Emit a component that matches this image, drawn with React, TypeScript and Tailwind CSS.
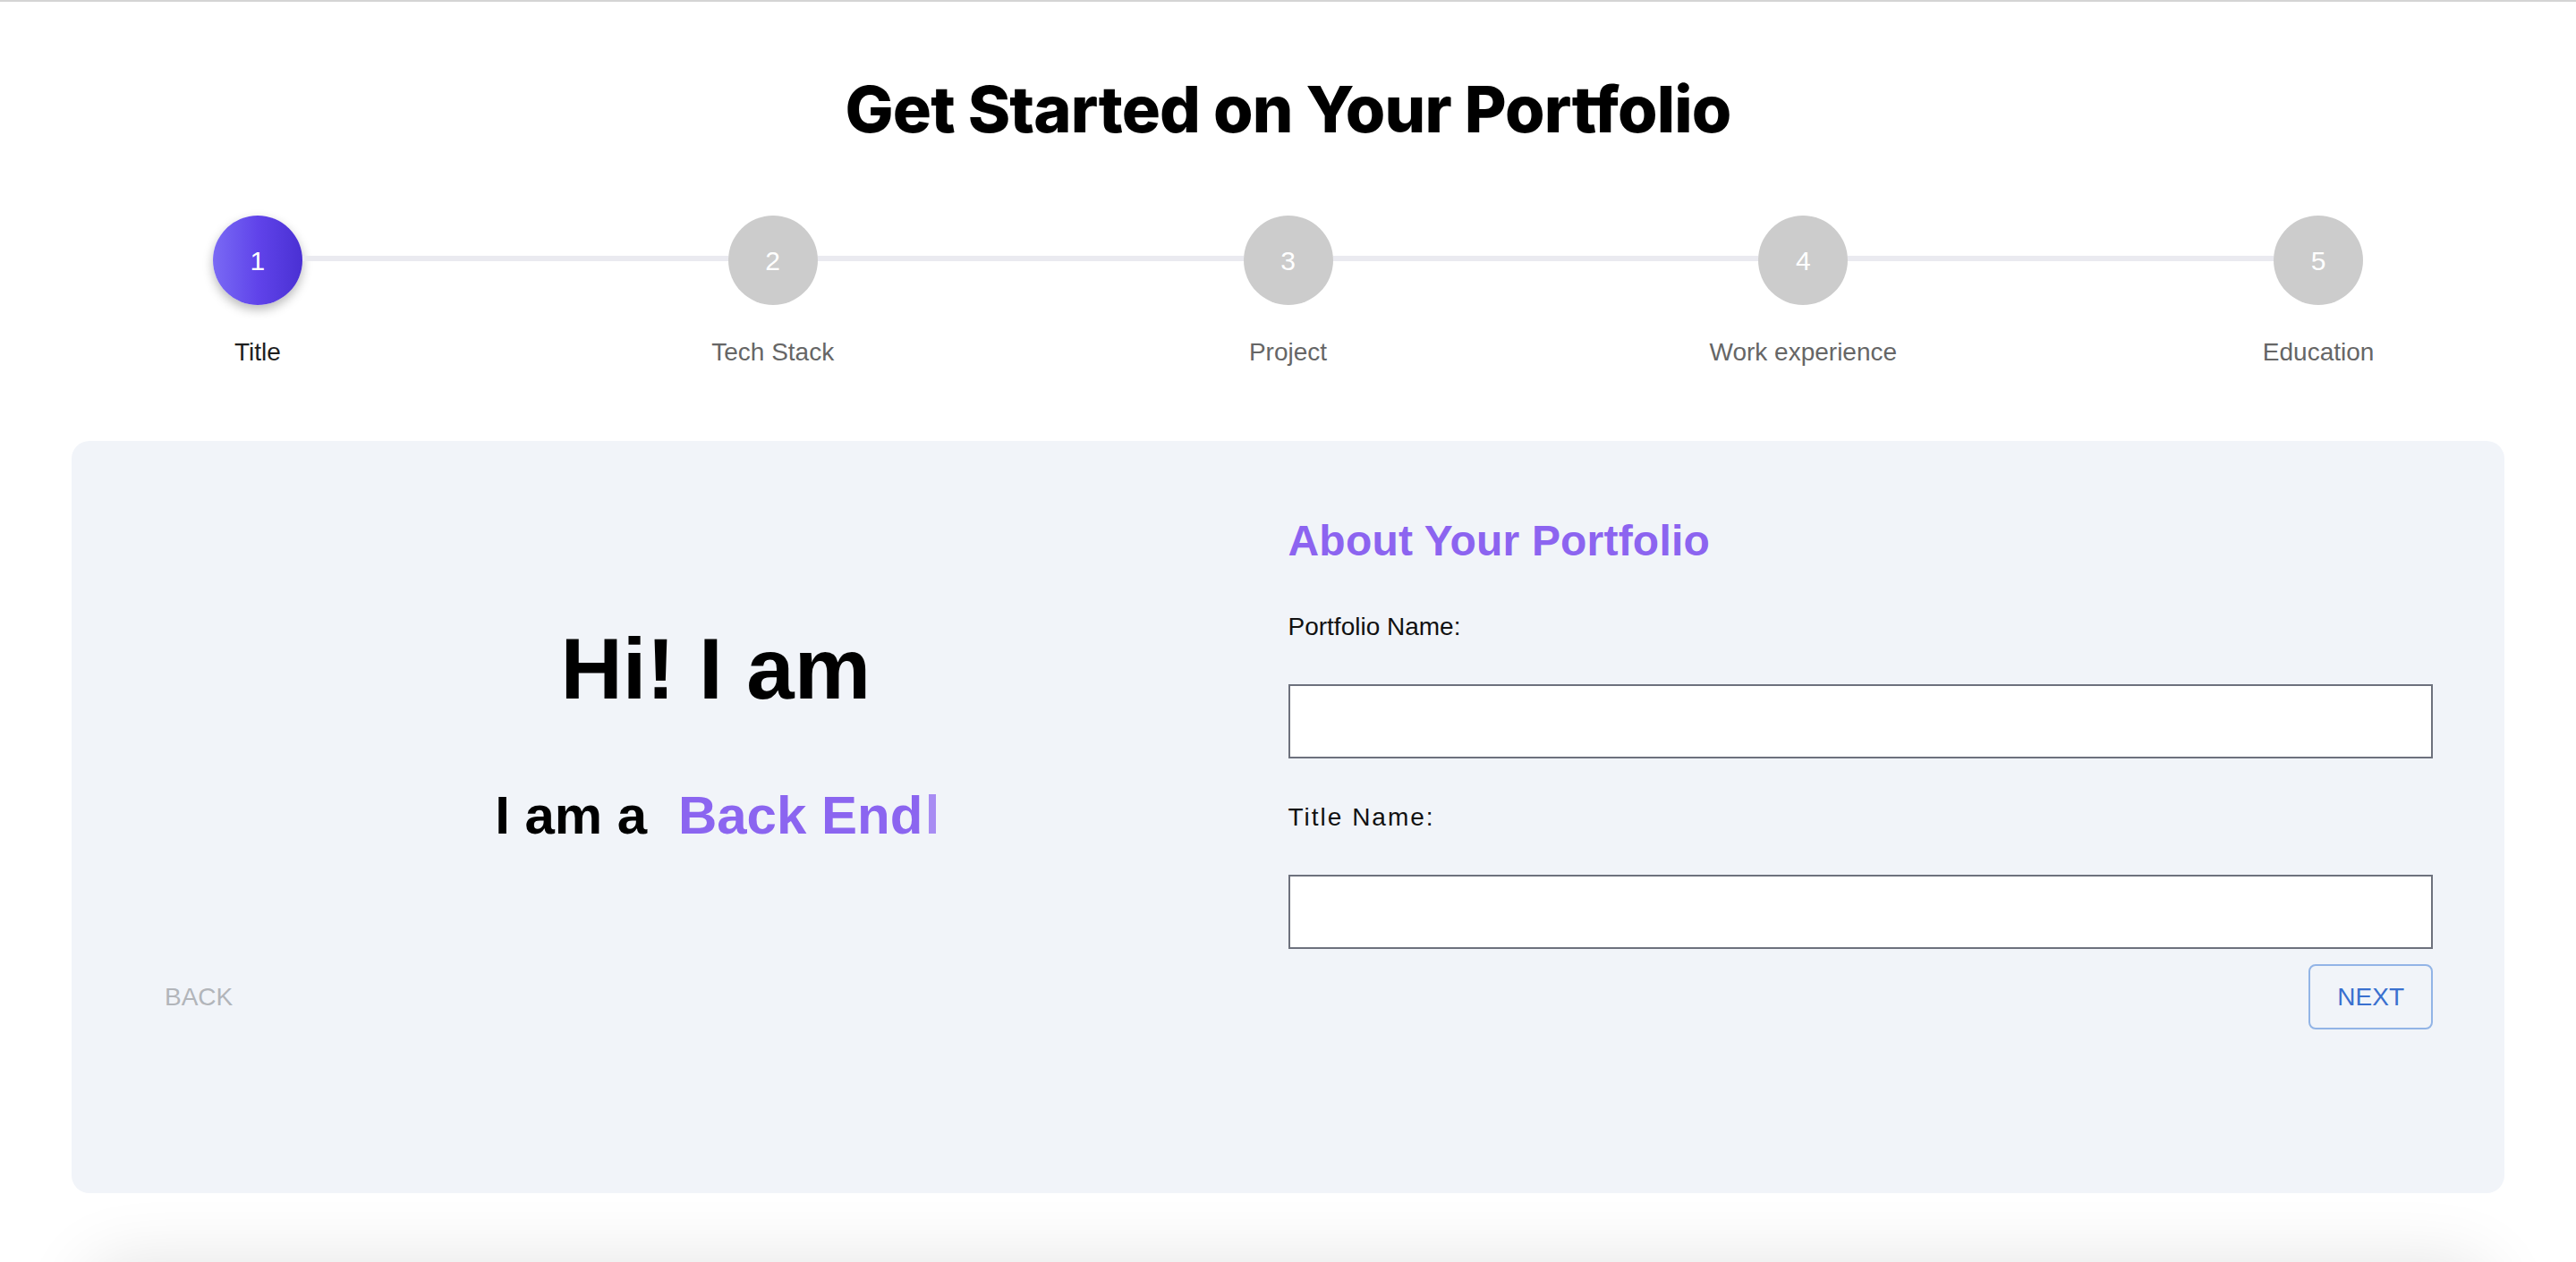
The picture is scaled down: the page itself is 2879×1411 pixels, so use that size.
import React from "react";

const steps = ["Title", "Tech Stack", "Project", "Work experience", "Education"];

function Stepper({ active = 0 }: { active?: number }) {
  return (
    <div className="mt-[83px] flex w-full">
      {steps.map((label, i) => (
        <div key={label} className="flex flex-1 flex-col items-center">
          <div className="flex w-full items-center">
            <div className={`mb-[4px] h-[6px] flex-1 ${i === 0 ? "bg-transparent" : "bg-[#eaeaf0]"}`} />
            {i === active ? (
              <div className="flex h-[100px] w-[100px] items-center justify-center rounded-full bg-linear-to-r from-[#7a69f4] via-[#6043ea] to-[#4a30d3] text-[30px] text-white shadow-[0_5px_12px_0_rgba(0,0,0,0.28)]">
                {i + 1}
              </div>
            ) : (
              <div className="flex h-[100px] w-[100px] items-center justify-center rounded-full bg-[#cccccc] text-[30px] text-white">
                {i + 1}
              </div>
            )}
            <div className={`mb-[4px] h-[6px] flex-1 ${i === steps.length - 1 ? "bg-transparent" : "bg-[#eaeaf0]"}`} />
          </div>
          <span
            className={`mt-[39px] text-[28px] leading-none ${i === active ? "text-[#1e1e1e]" : "text-[#666666]"}`}
          >
            {label}
          </span>
        </div>
      ))}
    </div>
  );
}

function Field({ label, first, wide }: { label: string; first?: boolean; wide?: boolean }) {
  return (
    <div className={`flex flex-col ${first ? "mt-[58px]" : "mt-[52px]"}`}>
      <label className={`text-[28px] leading-none text-[#111111] ${wide ? "tracking-[2px]" : ""}`}>{label}</label>
      <input
        type="text"
        className="mt-[50px] h-[83px] w-full border-2 border-[#6d717d] bg-white px-4 text-[28px] outline-none"
      />
    </div>
  );
}

export default function App() {
  return (
    <div className="h-[1411px] overflow-hidden border-t-2 border-[#d4d4d4] bg-white font-['Liberation_Sans',Arial,sans-serif]">
      <h1 className="pt-[84px] text-center font-['Inter',sans-serif] text-[72px] font-extrabold leading-none tracking-[-0.012em] text-black">
        Get Started on Your Portfolio
      </h1>

      <Stepper active={0} />

      {/* Step card */}
      <div className="mx-[80px] mt-[85px] rounded-[20px] bg-[#f1f4f9] px-[80px] pb-[183px] pt-[88px]">
        <div className="grid grid-cols-2">
          <div className="flex flex-col items-center justify-center">
            <p className="text-[96px] font-bold leading-none text-black">Hi! I am</p>
            <p className="mt-[86px] text-[60px] font-bold leading-none text-black">
              I am a{" "}
              <span className="ml-[18px] text-[#8b65f0]">Back End</span>
              <span className="ml-[7px] inline-block h-[44px] w-[8px] bg-[#a88cf3]" />
            </p>
          </div>

          <div className="flex flex-col">
            <h2 className="text-[48px] font-bold leading-none tracking-[0.2px] text-[#8c64f0]">About Your Portfolio</h2>
            <Field label="Portfolio Name:" first />
            <Field label="Title Name:" wide />
          </div>
        </div>

        <div className="mt-[17px] flex items-center justify-between">
          <button className="flex h-[73px] items-center px-[24px] text-[28px] text-[#b2b5ba]">BACK</button>
          <button className="flex h-[73px] items-center rounded-[8px] border-2 border-[#92b4e6] px-[30px] text-[28px] text-[#3a70cf]">
            NEXT
          </button>
        </div>
      </div>

      {/* next section peeking from below */}
      <div className="mx-[110px] mt-[90px] h-[300px] rounded-[20px] bg-white shadow-[0_0_80px_10px_rgba(0,0,0,0.12)]" />
    </div>
  );
}
